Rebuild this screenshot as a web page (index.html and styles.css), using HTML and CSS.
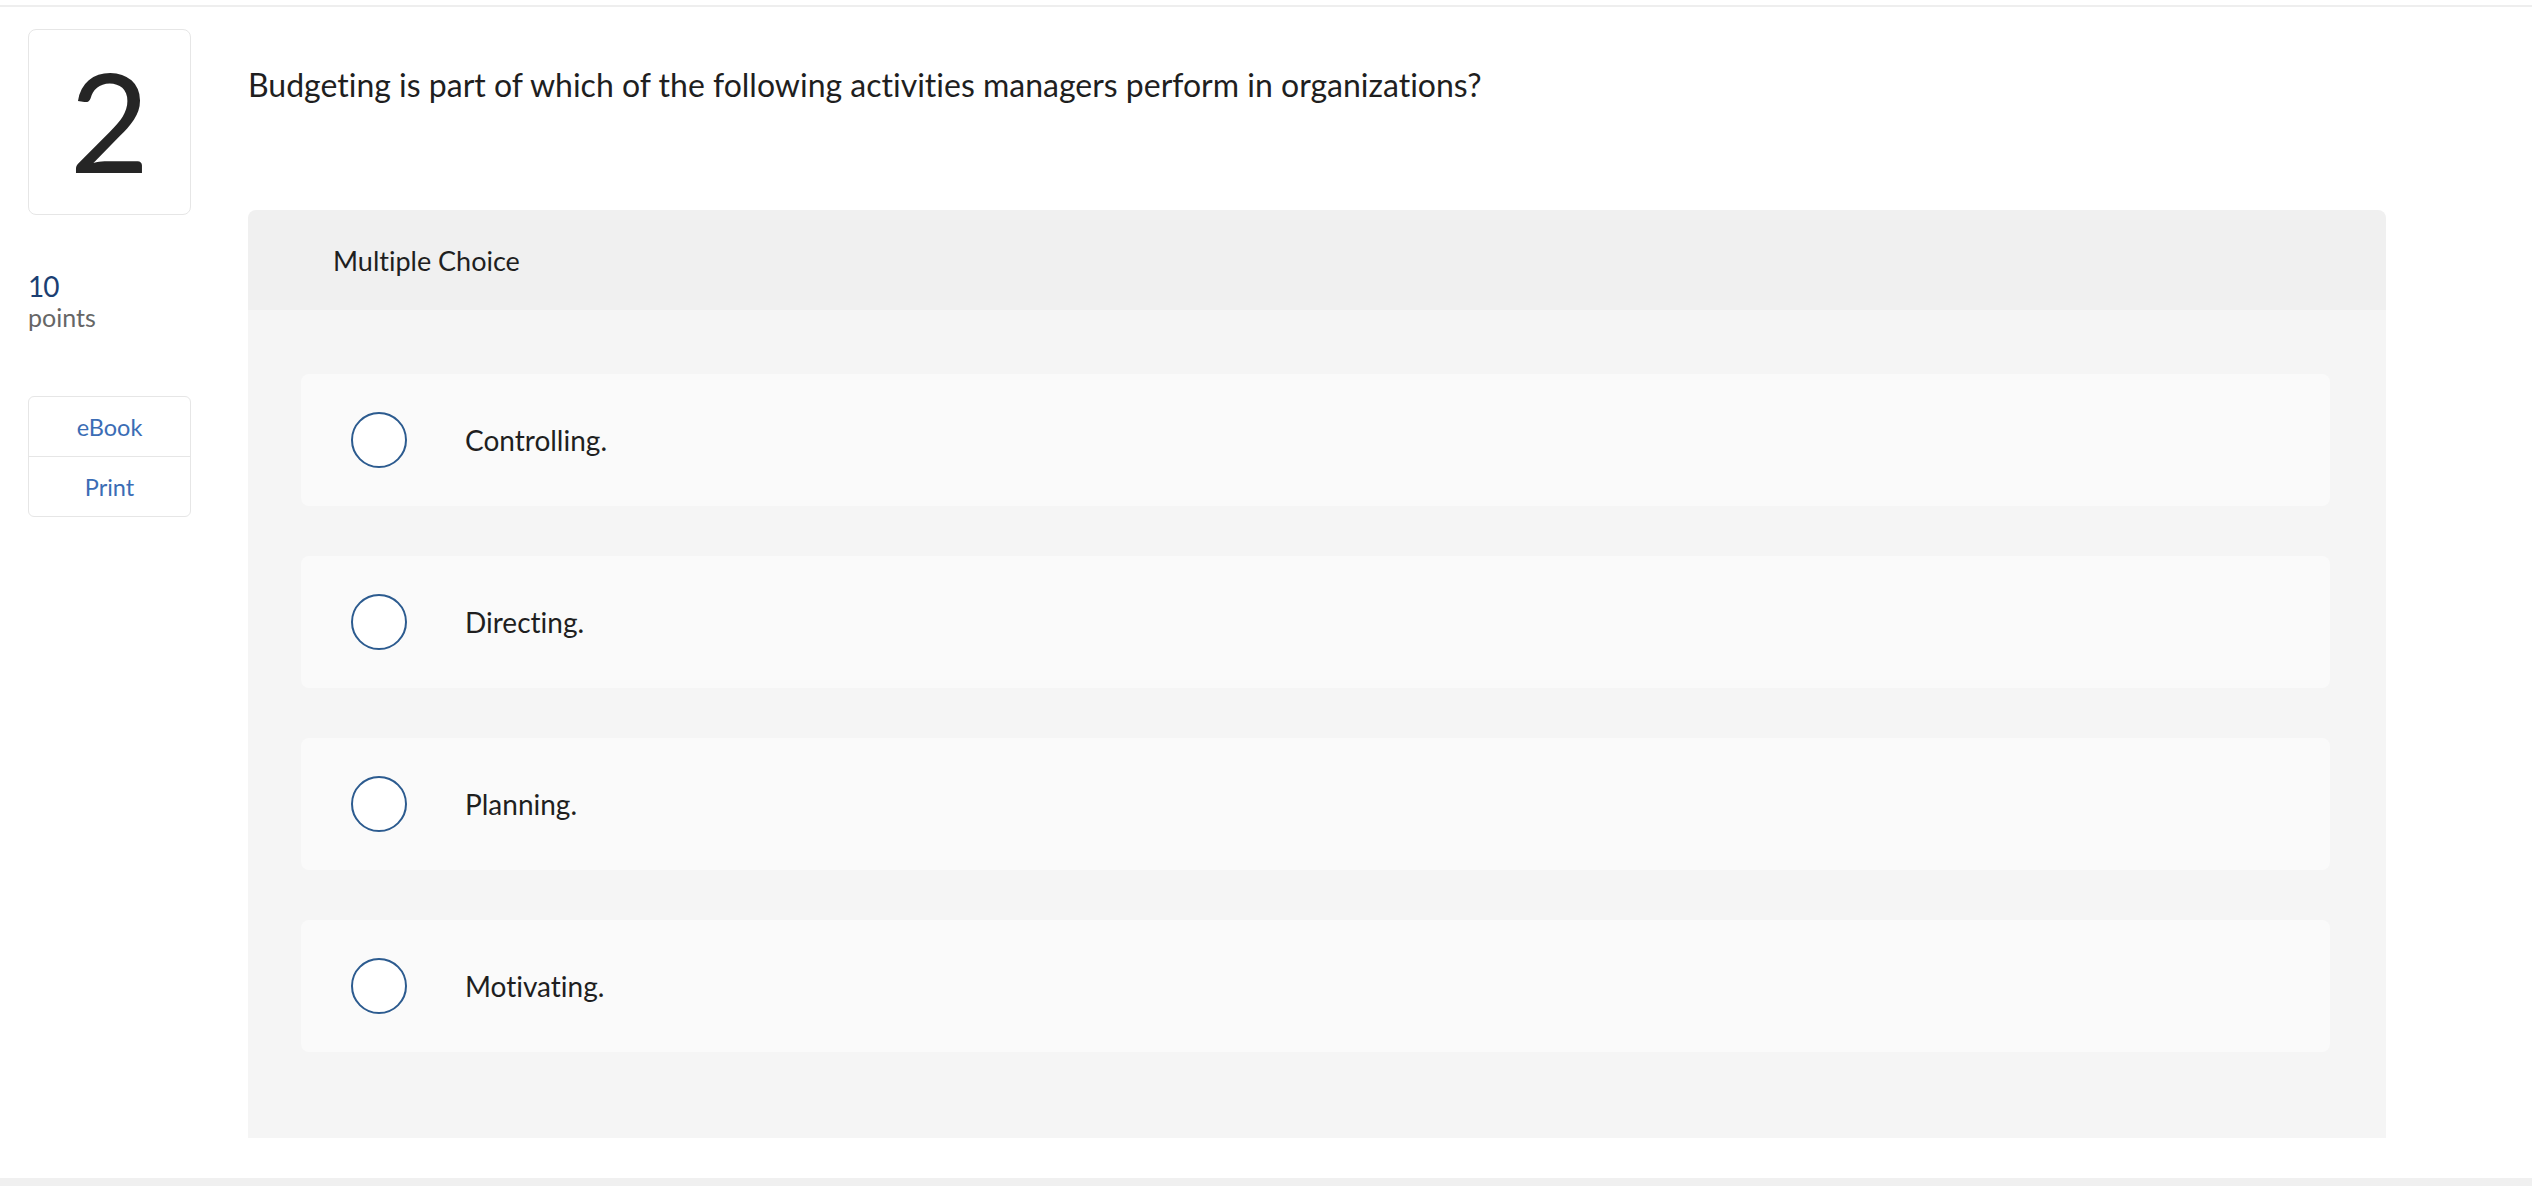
FILE: index.html
```html
<!DOCTYPE html>
<html lang="en">
<head>
<meta charset="utf-8">
<title>Question 2</title>
<link rel="stylesheet" href="styles.css">
</head>
<body>
<div class="topline"></div>
<div class="question">
  <aside class="side">
    <div class="numbox">2</div>
    <div class="points">
      <div class="points-num">10</div>
      <div class="points-label">points</div>
    </div>
    <div class="tools">
      <a class="tool">eBook</a>
      <a class="tool">Print</a>
    </div>
  </aside>
  <main class="main">
    <p class="prompt">Budgeting is part of which of the following activities managers perform in organizations?</p>
    <section class="panel">
      <div class="panel-head">Multiple Choice</div>
      <div class="panel-body">
        <label class="option"><span class="radio"></span><span class="opt-text">Controlling.</span></label>
        <label class="option"><span class="radio"></span><span class="opt-text">Directing.</span></label>
        <label class="option"><span class="radio"></span><span class="opt-text">Planning.</span></label>
        <label class="option"><span class="radio"></span><span class="opt-text">Motivating.</span></label>
      </div>
    </section>
  </main>
</div>
<div class="bottomline"></div>
</body>
</html>
```
FILE: styles.css
```css
html, body {
  margin: 0;
  padding: 0;
  background: #ffffff;
  font-family: Lato, "Noto Sans", sans-serif;
  font-variant-ligatures: none;
  color: #222222;
}
.topline {
  height: 2px;
  margin-top: 5px;
  background: #eeeeee;
}
.question {
  display: flex;
  padding: 22px 146px 0 28px;
}
.side {
  width: 163px;
  flex: none;
}
.numbox {
  box-sizing: border-box;
  height: 186px;
  border: 1px solid #e6e6e6;
  border-radius: 8px;
  display: flex;
  align-items: center;
  justify-content: center;
  font-size: 138px;
  line-height: 1;
  color: #252525;
  padding-bottom: 4px;
}
.points {
  margin-top: 54px;
}
.points-num {
  font-size: 28px;
  line-height: 34px;
  letter-spacing: -1px;
  color: #1b3f73;
}
.points-label {
  font-size: 25px;
  line-height: 28px;
  color: #666666;
}
.tools {
  margin-top: 65px;
  border: 1px solid #e6e6e6;
  border-radius: 6px;
  display: flex;
  flex-direction: column;
}
.tool {
  height: 59px;
  display: flex;
  align-items: center;
  justify-content: center;
  font-size: 23.5px;
  color: #3b6db5;
}
.tool + .tool {
  border-top: 1px solid #e6e6e6;
}
.main {
  flex: 1;
  margin-left: 57px;
}
.prompt {
  margin: 39px 0 0;
  font-size: 32px;
  line-height: 34px;
  color: #1f1f1f;
}
.panel {
  margin-top: 108px;
  border-radius: 8px 8px 0 0;
  overflow: hidden;
}
.panel-head {
  height: 100px;
  background: #f0f0f0;
  display: flex;
  align-items: center;
  padding-left: 85px;
  font-size: 27px;
  color: #1f1f1f;
}
.panel-body {
  background: #f5f5f5;
  padding: 64px 56px 86px 53px;
  display: flex;
  flex-direction: column;
  gap: 50px;
}
.option {
  height: 132px;
  background: #fafafa;
  border-radius: 8px;
  display: flex;
  align-items: center;
  padding-left: 50px;
}
.radio {
  box-sizing: border-box;
  width: 56px;
  height: 56px;
  border: 2px solid #2c5b8f;
  border-radius: 50%;
  background: #ffffff;
  flex: none;
}
.opt-text {
  margin-left: 58px;
  font-size: 28px;
  color: #1f1f1f;
}
.bottomline {
  margin-top: 40px;
  height: 8px;
  background: #f0f0f0;
}
```
